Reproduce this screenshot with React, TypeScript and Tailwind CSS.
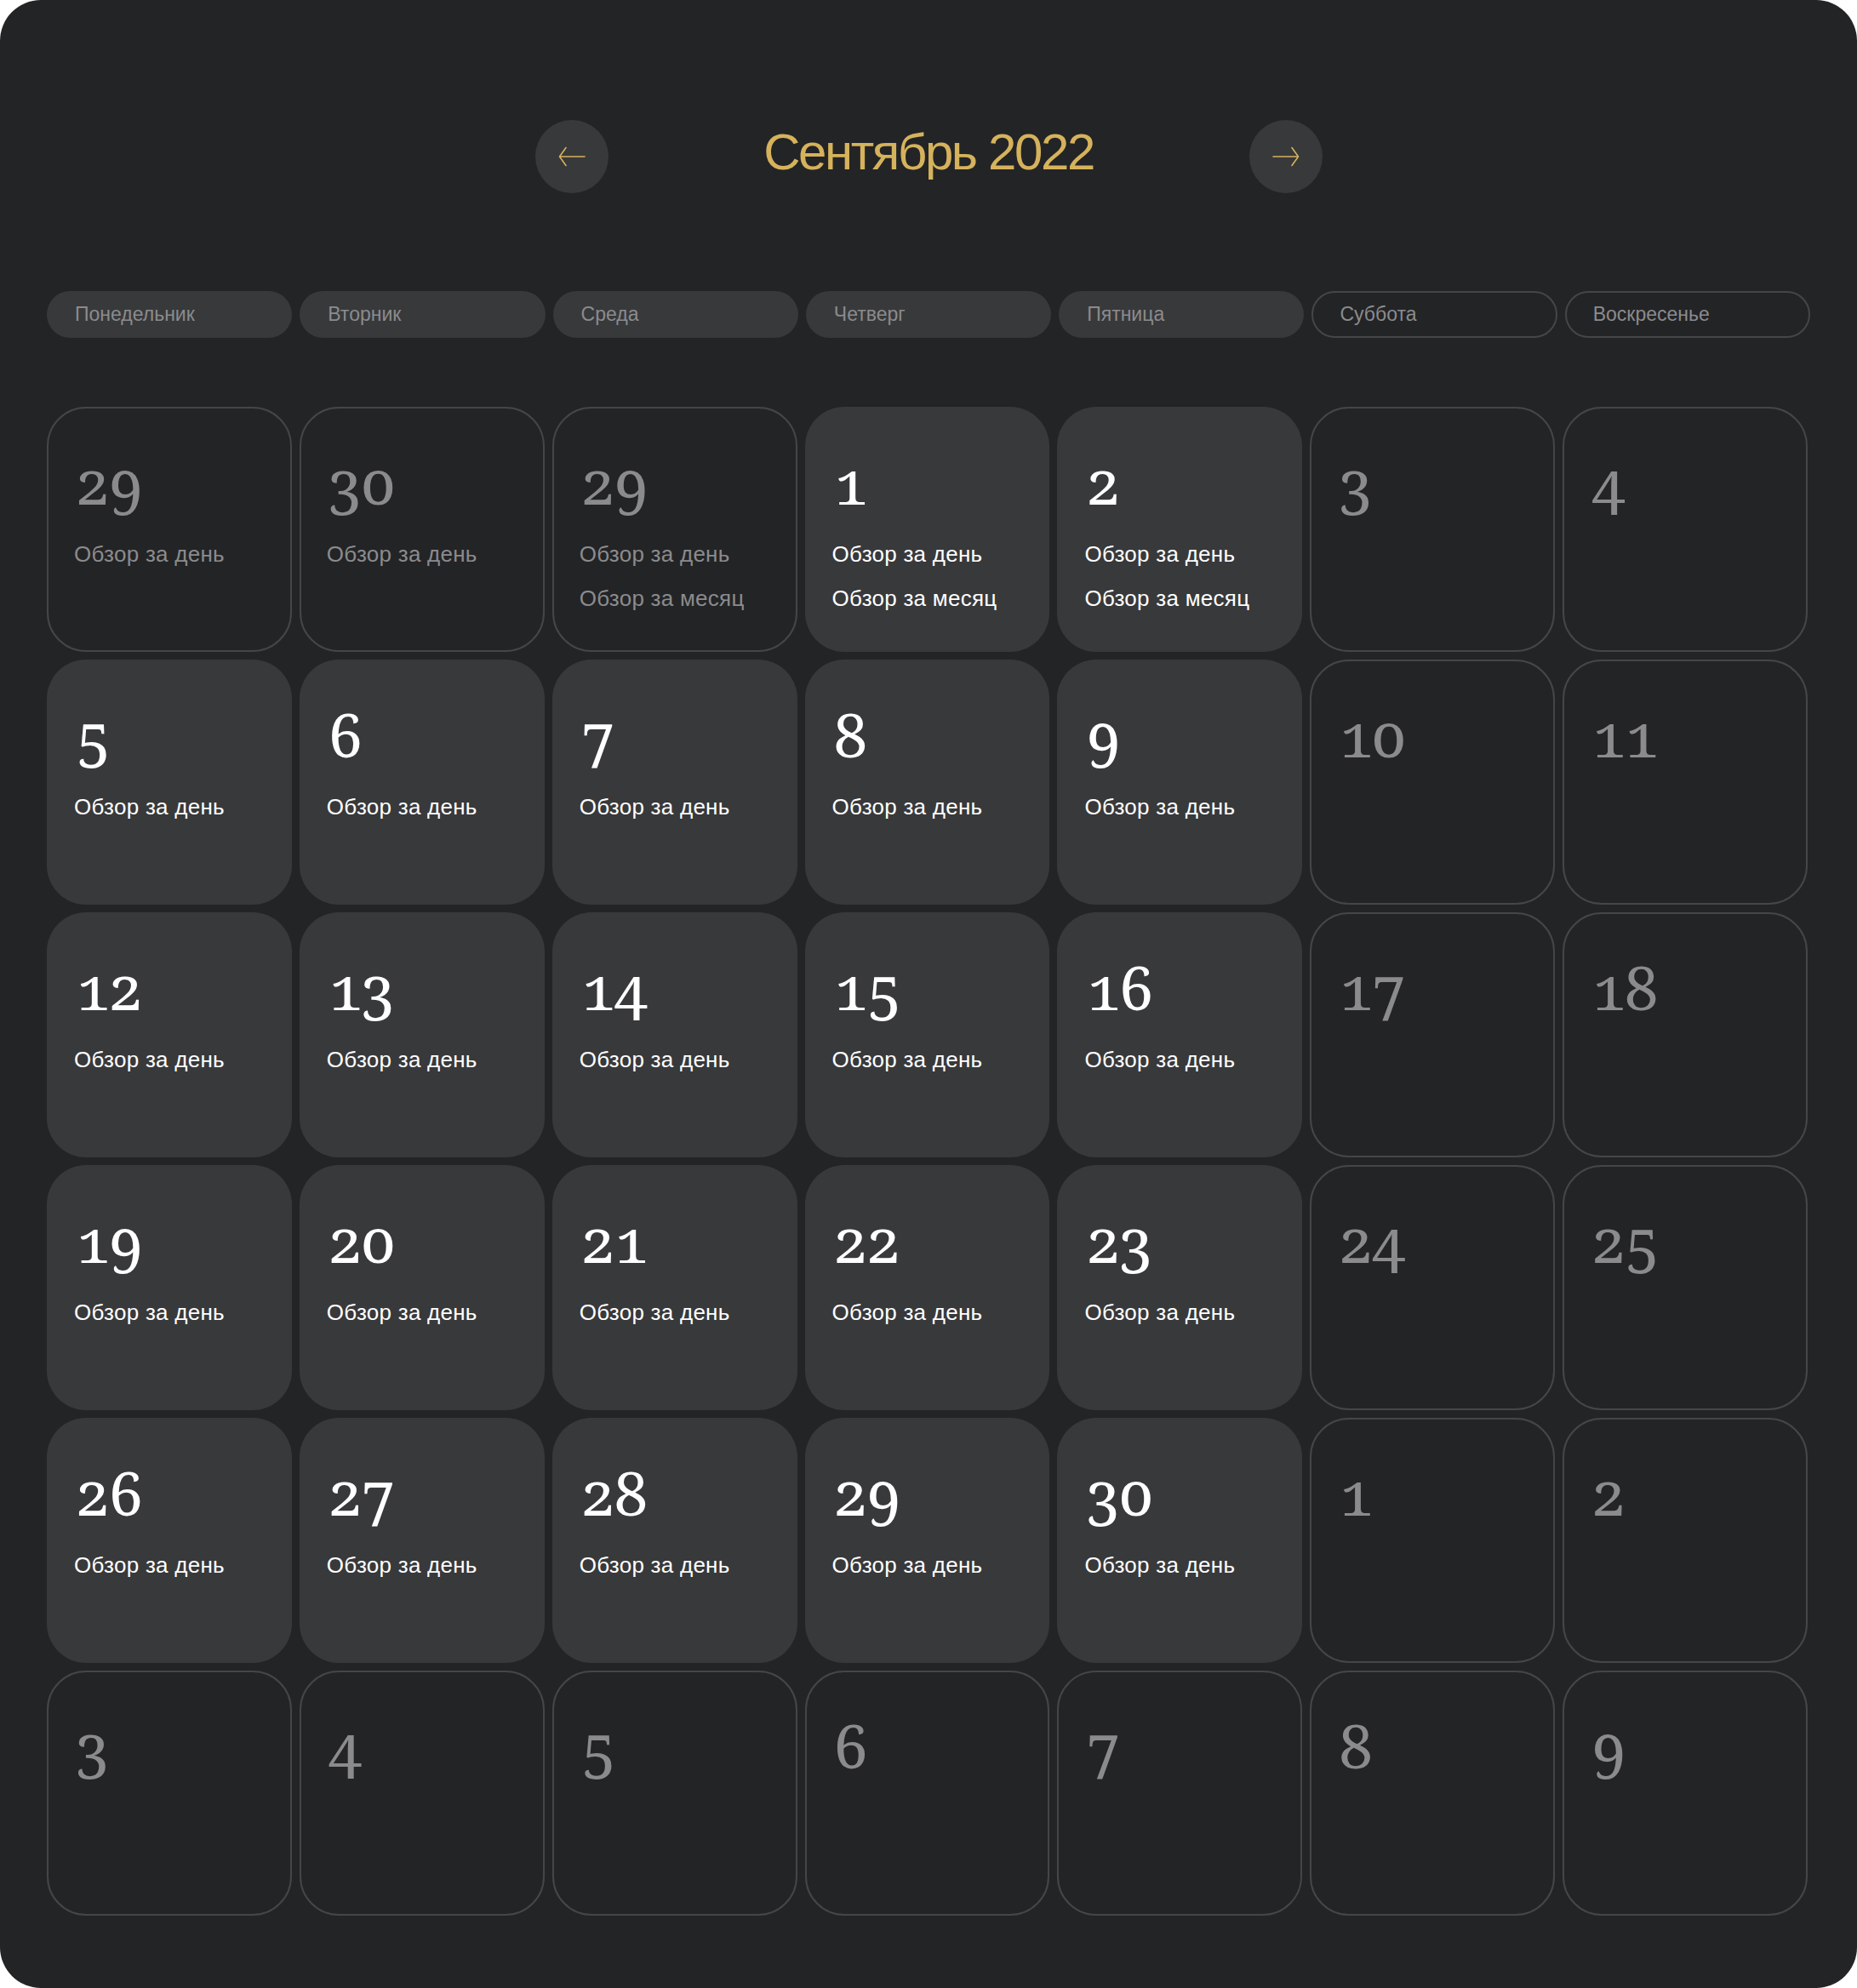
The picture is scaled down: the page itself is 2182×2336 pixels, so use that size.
import React from "react";

type Day = {
  num: number;
  filled: boolean;
  lines: string[];
};

const weekdays = [
  "Понедельник",
  "Вторник",
  "Среда",
  "Четверг",
  "Пятница",
  "Суббота",
  "Воскресенье",
];

const DAY = "Обзор за день";
const MONTH = "Обзор за месяц";

// собираем сетку месяца
function buildDays(): Day[] {
  const days: Day[] = [
    { num: 29, filled: false, lines: [DAY] },
    { num: 30, filled: false, lines: [DAY] },
    { num: 29, filled: false, lines: [DAY, MONTH] },
    { num: 1, filled: true, lines: [DAY, MONTH] },
    { num: 2, filled: true, lines: [DAY, MONTH] },
    { num: 3, filled: false, lines: [] },
    { num: 4, filled: false, lines: [] },
  ];
  for (let week = 0; week < 4; week++) {
    const start = 5 + week * 7;
    for (let i = 0; i < 7; i++) {
      const n = start + i;
      const weekend = i >= 5;
      days.push({
        num: n > 30 ? n - 30 : n,
        filled: !weekend,
        lines: weekend ? [] : [DAY],
      });
    }
  }
  for (let n = 3; n <= 9; n++) {
    days.push({ num: n, filled: false, lines: [] });
  }
  return days;
}

function Arrow({ dir }: { dir: "left" | "right" }) {
  return (
    <svg
      width="32"
      height="24"
      viewBox="0 0 32 24"
      fill="none"
      stroke="#d5b25c"
      strokeWidth={1.6}
      strokeLinecap="round"
      strokeLinejoin="round"
      className={dir === "right" ? "rotate-180" : ""}
    >
      <path d="M31 12H1.5M9 1.5L1.5 12L9 22.5" />
    </svg>
  );
}

function DayCell({ day }: { day: Day }) {
  const numColor = day.filled ? "text-white" : "text-[#8b8b8d]";
  const textColor = day.filled ? "text-white" : "text-[#8b8b8d]";
  return (
    <div
      className={
        day.filled
          ? "h-[288px] rounded-[46px] bg-[#38393b] px-[32px] pt-[51px]"
          : "h-[288px] rounded-[46px] border-2 border-[#454648] px-[30px] pt-[49px]"
      }
    >
      <div
        className={`font-['Noto_Serif',serif] oldstyle-nums text-[72px] leading-[72px] tracking-[-3px] pl-[1px] ${numColor}`}
      >
        {day.num}
      </div>
      <div
        className={`mt-[24px] font-['Liberation_Sans',Arial,sans-serif] text-[26px] leading-[52px] tracking-[0.01em] ${textColor}`}
      >
        {day.lines.map((l, i) => (
          <div key={i}>{l}</div>
        ))}
      </div>
    </div>
  );
}

export default function App() {
  const days = buildDays();

  return (
    <div className="bg-white w-[2182px]">
      <div className="min-h-[2336px] rounded-[48px] bg-[#232426] px-[55px] pb-[85px] font-['Liberation_Sans',Arial,sans-serif]">
        {/* шапка с месяцем */}
        <div className="pt-[141px] flex items-center justify-center">
          <button className="w-[86px] h-[86px] rounded-full bg-[#38393b] flex items-center justify-center">
            <Arrow dir="left" />
          </button>
          <div className="w-[753px] text-center">
            <h1 className="-mt-[10px] text-[60px] leading-[70px] tracking-[-0.04em] text-[#d5b25c]">
              Сентябрь 2022
            </h1>
          </div>
          <button className="w-[86px] h-[86px] rounded-full bg-[#38393b] flex items-center justify-center">
            <Arrow dir="right" />
          </button>
        </div>

        {/* дни недели */}
        <div className="mt-[115px] grid grid-cols-7 gap-[9px]">
          {weekdays.map((w, i) =>
            i < 5 ? (
              <div
                key={w}
                className="h-[55px] rounded-full bg-[#38393b] pl-[33px] flex items-center text-[23px] text-[#8b8b8d]"
              >
                {w}
              </div>
            ) : (
              <div
                key={w}
                className="h-[55px] rounded-full border-2 border-[#454648] pl-[31px] flex items-center text-[23px] text-[#8b8b8d]"
              >
                {w}
              </div>
            )
          )}
        </div>

        {/* сетка месяца */}
        <div className="mt-[81px] mr-[3px] grid grid-cols-7 gap-[9px]">
          {days.map((d, i) => (
            <DayCell key={i} day={d} />
          ))}
        </div>
      </div>
    </div>
  );
}
